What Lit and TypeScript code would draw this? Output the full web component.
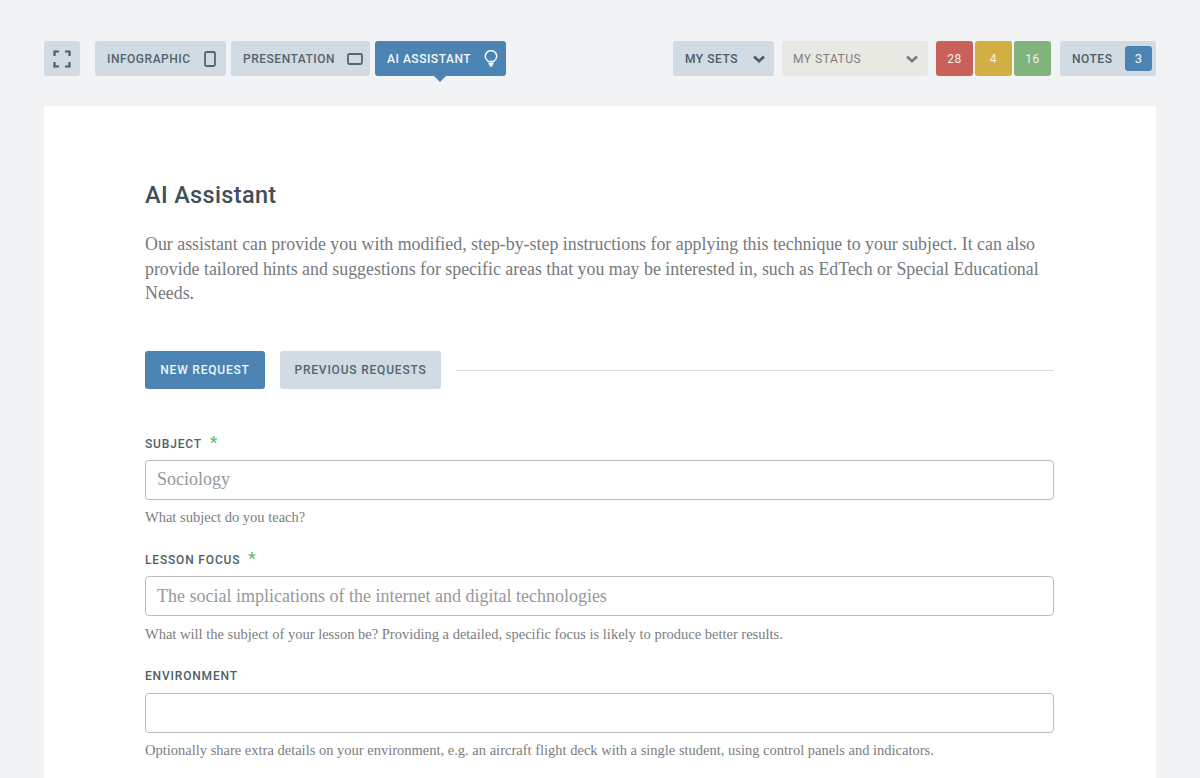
import { LitElement, html, css } from "lit";
import { customElement } from "lit/decorators.js";

const fields = [
  { label: "SUBJECT", req: true, value: "Sociology", hint: "What subject do you teach?" },
  { label: "LESSON FOCUS", req: true, value: "The social implications of the internet and digital technologies", hint: "What will the subject of your lesson be? Providing a detailed, specific focus is likely to produce better results." },
  { label: "ENVIRONMENT", req: false, value: "", hint: "Optionally share extra details on your environment, e.g. an aircraft flight deck with a single student, using control panels and indicators." },
];

const chevron = html`<svg class="chev" width="14" height="10" viewBox="0 0 14 10"><path d="M2 2.500 L7 7.200 L12 2.500" fill="none" stroke="currentColor" stroke-width="2.800"/></svg>`;

@customElement("app-root")
export class AppRoot extends LitElement {
  static styles = css`
    :host { display: block; height: 778px; overflow: hidden; background: #f1f3f5; box-sizing: border-box; padding: 41px 44px 0; font-family: Roboto, "Liberation Sans", sans-serif; }
    * { box-sizing: border-box; }
    .bar { display: flex; height: 35px; align-items: stretch; margin-bottom: 30px; }
    .btn { display: flex; align-items: center; justify-content: space-between; border-radius: 3px; background: #d0dbe4; color: #56646c; font-size: 12px; font-weight: 500; letter-spacing: .52px; padding: 0 10px 0 12px; position: relative; white-space: nowrap; }
    .icon { width: 36px; justify-content: center; padding: 0; margin-right: 15px; color: #4e5d65; }
    .w1 { width: 131px; margin-right: 5px; }
    .w2 { width: 139px; margin-right: 5px; padding-right: 7px; }
    .w3 { width: 131px; padding-right: 8px; }
    .active { background: #4b84b3; color: #f4f8fb; }
    .active::after { content: ""; position: absolute; left: 59px; bottom: -6px; border: 6px solid transparent; border-bottom: 0; border-top-color: #4b84b3; }
    .spacer { flex: 1; }
    .sets { width: 101px; margin-right: 8px; color: #4e5d65; padding-right: 8px; }
    .status { width: 146px; margin-right: 8px; background: #e9e9e4; color: #7c7f7e; font-weight: 400; padding-left: 11px; padding-right: 9px; }
    .num { width: 37px; justify-content: center; padding: 0; color: #f6f3ea; font-weight: 400; letter-spacing: .6px; margin-right: 2px; }
    .red { background: #c9605a; }
    .yellow { background: #d1af42; }
    .green { background: #7fb57c; margin-right: 9px; }
    .notes { width: 96px; padding-right: 4px; color: #4e5d65; }
    .badge { width: 27px; height: 25px; border-radius: 3px; background: #4b84b3; color: #eef4f8; display: flex; align-items: center; justify-content: center; font-size: 13px; font-weight: 400; letter-spacing: 0; }
    .card { background: #fff; border-radius: 4px 4px 0 0; height: 700px; padding: 74.500px 102px 0 101px; }
    h1 { margin: 0 0 23.500px; font-size: 23.500px; line-height: 28px; font-weight: 500; color: #3e5058; letter-spacing: .35px; }
    .lead { margin: 0 0 45px; font-family: "Liberation Serif", serif; font-size: 17.850px; line-height: 24.500px; color: #75797b; }
    .tabs { display: flex; align-items: center; gap: 15px; margin-bottom: 45px; }
    .tab { height: 38px; display: flex; align-items: center; justify-content: center; border-radius: 3px; font-size: 12px; font-weight: 500; letter-spacing: .8px; background: #d0dbe4; color: #56646c; white-space: nowrap; }
    .tab.on { width: 120px; background: #4b84b3; color: #eef4f8; }
    .tab.off { width: 161px; }
    .rule { flex: 1; height: 1px; background: #dcdfe2; margin-top: 1px; }
    .field { margin-bottom: 24px; }
    .label { font-size: 12px; line-height: 18px; font-weight: 500; letter-spacing: .83px; color: #4e5f67; margin-bottom: 8px; height: 18px; }
    .req { color: #6cba74; margin-left: 8px; font-size: 16px; line-height: 18px; font-weight: 700; }
    .input { height: 40px; border: 1px solid #b9bcbe; border-radius: 4px; padding: 0 11px; display: flex; align-items: center; font-family: "Liberation Serif", serif; font-size: 18px; color: #96999b; }
    .hint { margin-top: 8.500px; font-family: "Liberation Serif", serif; font-size: 14.500px; line-height: 18px; color: #7b7e80; white-space: nowrap; }
  `;

  render() {
    return html`
      <div class="bar">
        <div class="btn icon"><svg width="18" height="18" viewBox="0 0 18 18" fill="none" stroke="currentColor" stroke-width="2.200"><path d="M1.500 6V1.500H6M12 1.500H16.500V6M16.500 12V16.500H12M6 16.500H1.500V12"/></svg></div>
        <div class="btn w1">INFOGRAPHIC <svg width="12" height="16" viewBox="0 0 12 16" fill="none" stroke="currentColor" stroke-width="1.800"><rect x="1" y="1" width="10" height="14" rx="1.500"/></svg></div>
        <div class="btn w2">PRESENTATION <svg width="16" height="12" viewBox="0 0 16 12" fill="none" stroke="currentColor" stroke-width="1.800"><rect x="1" y="1" width="14" height="10" rx="1.500"/></svg></div>
        <div class="btn w3 active">AI ASSISTANT <svg width="14" height="17" viewBox="0 0 14 17" fill="none" stroke="currentColor" stroke-width="1.500"><path d="M4.500 11.500C3 10.300 1.200 9 1.200 6.500a5.800 5.800 0 0 1 11.600 0C12.800 9 11 10.300 9.500 11.500Z"/><path d="M4.500 13.500h5M5.500 15.500h3" stroke-width="1.800"/></svg></div>
        <div class="spacer"></div>
        <div class="btn sets">MY SETS ${chevron}</div>
        <div class="btn status">MY STATUS ${chevron}</div>
        <div class="btn num red">28</div>
        <div class="btn num yellow">4</div>
        <div class="btn num green">16</div>
        <div class="btn notes">NOTES <span class="badge">3</span></div>
      </div>
      <div class="card">
        <h1>AI Assistant</h1>
        <p class="lead">Our assistant can provide you with modified, step-by-step instructions for applying this technique to your subject. It can also provide tailored hints and suggestions for specific areas that you may be interested in, such as EdTech or Special Educational Needs.</p>
        <div class="tabs">
          <div class="tab on">NEW REQUEST</div>
          <div class="tab off">PREVIOUS REQUESTS</div>
          <div class="rule"></div>
        </div>
        ${fields.map(f => html`
          <div class="field">
            <div class="label">${f.label}${f.req ? html`<span class="req">*</span>` : ""}</div>
            <div class="input">${f.value}</div>
            <div class="hint">${f.hint}</div>
          </div>`)}
      </div>
    `;
  }
}
